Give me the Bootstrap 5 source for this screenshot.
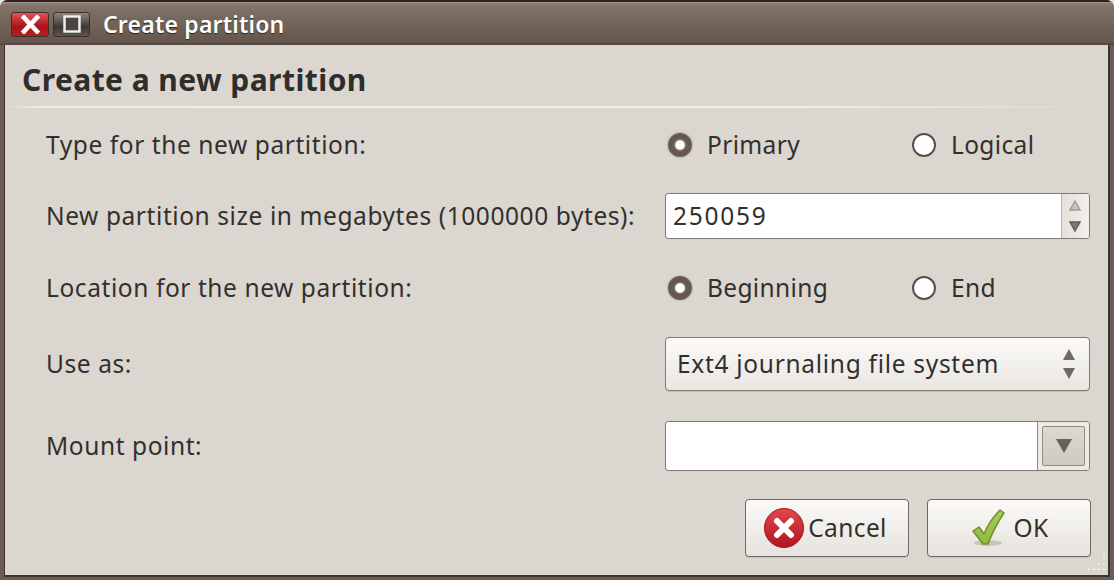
<!doctype html>
<html lang="en"><head><meta charset="utf-8"><title>Create partition</title>
<link href="https://cdn.jsdelivr.net/npm/bootstrap@5.3.0/dist/css/bootstrap.min.css" rel="stylesheet">
<style>
html,body{margin:0;height:580px;overflow:hidden;background:#e9e6e2}
body{font-family:"Noto Sans","Open Sans",sans-serif;color:#32302d}
.win{height:580px;width:1114px;border-radius:8px 8px 0 0;background:#6b5d53;padding:0 4px 3px;overflow:hidden}
.tbar{height:45px;margin:0 -4px;flex:none;background:linear-gradient(#a0938a 0,#85766b 6%,#7a6b60 30%,#64564c 100%);border-top:2px solid #2a2420;border-bottom:2px solid #57493f;padding:3px 0 0 11px;gap:4px}
.pane{flex:1;min-height:0;background:#dbd6cf;border:solid #3b3530;border-width:0 2px 2px 1px;position:relative}
.wbtn{height:25px;border-radius:3px;border:1px solid #3a302a;width:38px}
.wclose{background:linear-gradient(#e2555a,#a81218 60%,#b92026)}
.wmax{background:linear-gradient(#8d857d,#3c3835 60%,#5b5550);width:37px}
.ttl{font-size:23px;font-weight:600;color:#fff;margin-left:9px;letter-spacing:.2px;text-shadow:0 1px 1px #2c241e}
.hdg{font-size:30px;font-weight:700;color:#2f2e2c;padding-left:17px;height:63px;letter-spacing:.43px;line-height:1;padding-top:20px;background:linear-gradient(90deg,#dbd6cf,#efebe6 3%,#f2efeb 70%,#dbd6cf) left 61px/100% 2px no-repeat}
.frow{padding:0 19px 0 41px;display:flex;align-items:center}
.lbl{width:619px;font-size:24.5px;line-height:1;white-space:nowrap;letter-spacing:.58px;flex:none}
.ctl{width:425px;flex:none}
.r1{height:50px;margin-top:12px}.r2{height:46px;margin-top:23px}.r3{height:50px;margin-top:24px}.r4{height:54px;margin-top:24px}.r5{height:50px;margin-top:30px}
.opt{font-size:24.5px;letter-spacing:.35px;display:flex;align-items:center;line-height:1}
.o1{width:247px;padding-left:3px}
.rad{width:24px;height:24px;border-radius:50%;flex:none;margin-right:15px;background:#fff;border:2px solid #5a4f47}
.rad.on{background:radial-gradient(circle,#fff 0 4px,#6b5b50 6px,#5c4e44 100%);border-color:#6a5c52;box-shadow:0 0 2px #8b7c71}
.spin{height:46px;border:1px solid #7e7971;border-radius:3px;background:#fff;overflow:hidden}
.spinv{font-size:24.5px;letter-spacing:1.75px;padding-left:7px;flex:1;line-height:1}
.spinb{width:28px;border-left:1px solid #bdb8b0;background:linear-gradient(90deg,#e4e0da,#f2efec);gap:10px;padding-right:2px}
.combo{height:54px;border:1px solid #7e7971;border-radius:4px;background:linear-gradient(#fbfaf9,#e9e6e1);padding:0 14px 0 11px;font-size:24.5px;letter-spacing:.7px;box-shadow:0 1px 0 #c6c1b9}
.ent{height:50px;border:1px solid #7e7971;border-radius:3px;background:#fff;overflow:hidden}
.entb{width:52px;border-left:1px solid #8f8a82;background:#eeebe7;padding:4px}
.entb span{border:1px solid #8f8a82;background:linear-gradient(#dcd8d2,#cfcac3);border-radius:2px}
.acts{padding-right:17px;gap:18px;margin-top:28px;justify-content:flex-end}
.bt{width:164px;height:58px;border:1px solid #6f6a62;border-radius:4px;background:linear-gradient(#fbfaf9,#e6e2dd);font-size:24.5px;color:#32302d;padding:0;letter-spacing:.4px;box-shadow:0 1px 0 #c6c1b9}
.bt:hover{background:linear-gradient(#fbfaf9,#e6e2dd);color:#32302d;border-color:#6f6a62}
.bcan{padding-right:3px}.bok{padding-left:2px}.bok svg{margin-right:6px}
.grip{position:absolute;right:0;bottom:0}
</style></head><body>
<div class="win d-flex flex-column">
 <div class="tbar d-flex align-items-center">
  <span class="wbtn wclose d-flex align-items-center justify-content-center"><svg width="21" height="19" viewBox="0 0 21 19"><path d="M4 2.5 L17 16.5 M17 2.5 L4 16.5" stroke="#fff" stroke-width="4.6" stroke-linecap="square"/></svg></span>
  <span class="wbtn wmax d-flex align-items-center justify-content-center"><svg width="18" height="18" viewBox="0 0 18 18"><rect x="1.5" y="1.5" width="15" height="15" fill="#4b4643" stroke="#f4f3f2" stroke-width="2.4"/></svg></span>
  <span class="ttl">Create partition</span>
 </div>
 <div class="pane d-flex flex-column">
 <div class="hdg">Create a new partition</div>
 <div class="frow r1"><div class="lbl">Type for the new partition:</div><div class="ctl d-flex"><label class="opt o1"><span class="rad on"></span>Primary</label><label class="opt o2"><span class="rad"></span>Logical</label></div></div>
 <div class="frow r2"><div class="lbl">New partition size in megabytes (1000000 bytes):</div><div class="ctl spin d-flex align-items-center"><span class="spinv">250059</span><span class="spinb h-100 d-flex flex-column align-items-center justify-content-center"><svg width="12" height="11" viewBox="0 0 12 11"><path d="M6 1 L11 10 H1Z" fill="#c9c4bc" stroke="#a09a91" stroke-width="1.4"/></svg><svg width="12" height="11" viewBox="0 0 12 11"><path d="M6 10 L11 1 H1Z" fill="#7d7870" stroke="#5f5a53" stroke-width="1.4"/></svg></span></div></div>
 <div class="frow r3"><div class="lbl">Location for the new partition:</div><div class="ctl d-flex"><label class="opt o1"><span class="rad on"></span>Beginning</label><label class="opt o2"><span class="rad"></span>End</label></div></div>
 <div class="frow r4"><div class="lbl">Use as:</div><div class="ctl combo d-flex align-items-center justify-content-between"><span>Ext4 journaling file system</span><span class="d-flex flex-column" style="gap:8px"><svg width="12" height="11" viewBox="0 0 12 11"><path d="M6 0 L12 11 H0Z" fill="#6f6a63"/></svg><svg width="12" height="11" viewBox="0 0 12 11"><path d="M6 11 L12 0 H0Z" fill="#6f6a63"/></svg></span></div></div>
 <div class="frow r5"><div class="lbl">Mount point:</div><div class="ctl ent d-flex"><span class="flex-fill"></span><span class="entb d-flex"><span class="flex-fill d-flex align-items-center justify-content-center"><svg width="16" height="14" viewBox="0 0 16 14"><path d="M8 14 L16 0 H0Z" fill="#66625b"/></svg></span></span></div></div>
 <div class="d-flex acts">
  <button class="btn bt bcan d-flex align-items-center justify-content-center"><svg class="me-1" width="40" height="40" viewBox="0 0 40 40"><defs><linearGradient id="rg" x1="0" y1="0" x2="0" y2="1"><stop offset="0" stop-color="#e2474e"/><stop offset="1" stop-color="#b3151e"/></linearGradient></defs><circle cx="20" cy="20" r="19.5" fill="url(#rg)"/><circle cx="20" cy="20" r="19.5" fill="none" stroke="#a5141c"/><path d="M13 13 L27 27 M27 13 L13 27" stroke="#fff" stroke-width="6" stroke-linecap="round"/></svg>Cancel</button>
  <button class="btn bt bok d-flex align-items-center justify-content-center"><svg width="36" height="38" viewBox="0 0 36 38"><defs><linearGradient id="gg" x1="0" y1="0" x2="0" y2="1"><stop offset="0" stop-color="#a9cf58"/><stop offset="1" stop-color="#8fb93f"/></linearGradient></defs><ellipse cx="17" cy="34" rx="14" ry="3" fill="#c9c5be"/><path d="M2 22 L8 18 L13 25 C17 15 23 7 29 1 L33 4 C27 13 21 24 17 35 L12 35 Z" fill="url(#gg)" stroke="#6f8f2b" stroke-width="1.5" stroke-linejoin="round"/></svg>OK</button>
 </div>
 <svg class="grip" width="24" height="26" viewBox="0 0 24 26"><g fill="#f1eeea"><circle cx="20" cy="5" r="1"/><circle cx="20" cy="10" r="1"/><circle cx="20" cy="15" r="1"/><circle cx="15" cy="15" r="1"/><circle cx="20" cy="20" r="1"/><circle cx="15" cy="20" r="1"/><circle cx="10" cy="20" r="1"/><circle cx="5" cy="20" r="1"/></g></svg>
 </div>
</div>
</body></html>
